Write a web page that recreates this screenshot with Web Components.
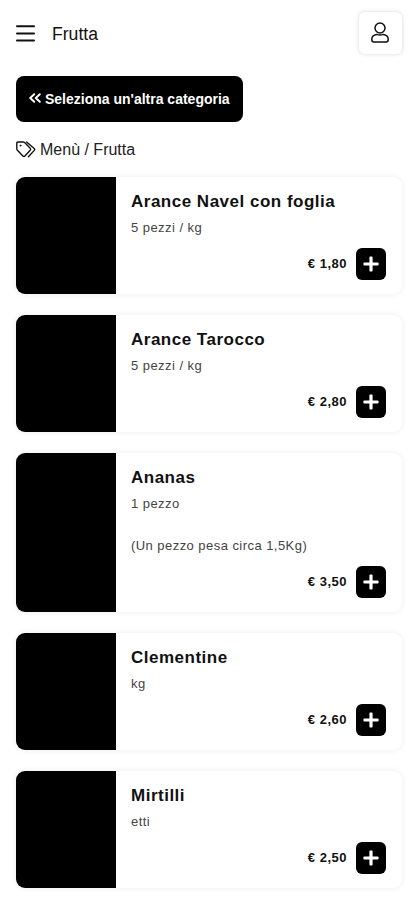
<!DOCTYPE html>
<html lang="it">
<head>
<meta charset="utf-8">
<meta name="viewport" content="width=device-width, initial-scale=1">
<title>Frutta</title>
<style>
    body {
        margin: 0;
        height: 900px;
        overflow: hidden;
        background-color: #fff;
        color: #111;
        font-family: "Liberation Sans", Arial, sans-serif;
    }

    main {
        padding: 11px 12px 0 16px;
    }

    .products {
        display: flex;
        flex-direction: column;
        gap: 21px;
        margin-top: 17px;
    }
</style>
</head>
<body>
<main>
    <top-bar>Frutta</top-bar>
    <back-button>Seleziona un'altra categoria</back-button>
    <menu-path>Menù / Frutta</menu-path>
    <div class="products">
        <product-card price="€ 1,80">Arance Navel con foglia<span slot="info">5 pezzi / kg</span></product-card>
        <product-card price="€ 2,80">Arance Tarocco<span slot="info">5 pezzi / kg</span></product-card>
        <product-card price="€ 3,50">Ananas<span slot="info">1 pezzo<br><br>(Un pezzo pesa circa 1,5Kg)</span></product-card>
        <product-card price="€ 2,60">Clementine<span slot="info">kg</span></product-card>
        <product-card price="€ 2,50">Mirtilli<span slot="info">etti</span></product-card>
    </div>
</main>

<script>
var barTemplate = document.createElement("template");
barTemplate.innerHTML = `
<style>
    :host {
        display: flex;
        align-items: center;
        height: 44px;
        margin-right: 1.5px;
        font-size: 17.6px;
    }

    .menu {
        width: 19px;
        height: 17px;
        margin-right: 17px;
    }

    .title {
        flex: 1;
        padding-top: 2px;
    }

    .user {
        display: flex;
        align-items: center;
        justify-content: center;
        width: 43px;
        height: 42px;
        border-radius: 6px;
        background-color: #fff;
        box-shadow: 0 0 4px rgba(0, 0, 0, 0.16);
    }
</style>
<svg class="menu" viewBox="0 0 19 17" stroke="#111" stroke-width="2" stroke-linecap="round">
    <path d="M1 1.3H18M1 8.5H18M1 15.6H18"/>
</svg>
<div class="title"><slot></slot></div>
<div class="user">
    <svg width="18" height="22" viewBox="0 0 18 22" fill="none" stroke="#111" stroke-width="1.5">
        <circle cx="9" cy="6" r="5"/>
        <path d="M5.6 12.4C2.6 12.8 .8 14.9 .8 17.4C.8 19.2 1.5 19.9 2.8 19.9H15.2C16.5 19.9 17.2 19.2 17.2 17.4C17.2 14.9 15.4 12.8 12.4 12.4C10.3 13.2 7.7 13.2 5.6 12.4Z"/>
    </svg>
</div>
`;

class TopBar extends HTMLElement {
    constructor(){
        super();
        this.attachShadow({mode:"open"})
    }

    connectedCallback(){
        this.shadowRoot.appendChild(barTemplate.content.cloneNode(true));
    }
}

customElements.define("top-bar", TopBar)


var backTemplate = document.createElement("template");
backTemplate.innerHTML = `
<style>
    :host {
        display: block;
        margin-top: 21px;
    }

    button {
        display: flex;
        align-items: center;
        width: 227px;
        height: 46px;
        padding: 0 0 0 13px;
        border: none;
        border-radius: 8px;
        background-color: #000;
        color: #fff;
        font: bold 14px "Liberation Sans", Arial, sans-serif;
        white-space: nowrap;
    }

    svg {
        margin: 0 4px 2px 0;
    }
</style>
<button>
    <svg width="12" height="10" viewBox="0 0 12 10" fill="none" stroke="#fff" stroke-width="1.9" stroke-linecap="round" stroke-linejoin="round">
        <path d="M5.2 1.2L1.2 5L5.2 8.8M10.8 1.2L6.8 5L10.8 8.8"/>
    </svg>
    <span><slot></slot></span>
</button>
`;

class BackButton extends HTMLElement {
    constructor(){
        super();
        this.attachShadow({mode:"open"})
    }

    connectedCallback(){
        this.shadowRoot.appendChild(backTemplate.content.cloneNode(true));
    }
}

customElements.define("back-button", BackButton)


var pathTemplate = document.createElement("template");
pathTemplate.innerHTML = `
<style>
    :host {
        display: flex;
        align-items: center;
        gap: 4px;
        height: 20px;
        margin-top: 18px;
        color: #222;
        font-size: 16px;
    }

    svg {
        margin-bottom: 2px;
    }
</style>
<svg width="20" height="17" viewBox="0 0 20 17" fill="none" stroke="#111" stroke-width="1.4" stroke-linejoin="round" stroke-linecap="round">
    <path d="M.8 2.2Q.8 1 2 1H7.2Q8 1 8.6 1.6L14.2 7.2Q15.2 8.2 14.2 9.2L8.9 14.9Q7.9 15.9 6.9 14.9L1.4 9.2Q.8 8.6 .8 7.8Z"/>
    <path d="M10.6 1L18.2 7.5Q19.2 8.4 18.3 9.4L12.4 15.8"/>
    <circle cx="4.5" cy="4.6" r=".7" fill="#111" stroke-width=".5"/>
</svg>
<span><slot></slot></span>
`;

class MenuPath extends HTMLElement {
    constructor(){
        super();
        this.attachShadow({mode:"open"})
    }

    connectedCallback(){
        this.shadowRoot.appendChild(pathTemplate.content.cloneNode(true));
    }
}

customElements.define("menu-path", MenuPath)


var cardTemplate = document.createElement("template");
cardTemplate.innerHTML = `
<style>
    :host {
        display: flex;
        min-height: 117px;
        margin-right: 1px;
        border-radius: 9px;
        overflow: hidden;
        background-color: #fff;
        box-shadow: 0 0 6px rgba(0, 0, 0, 0.08);
    }

    .photo {
        width: 100px;
        background-color: #000;
    }

    .text {
        flex: 1;
        display: flex;
        flex-direction: column;
        padding: 14px 16px 14px 15px;
    }

    .name {
        font-size: 17px;
        line-height: 21px;
        font-weight: bold;
        letter-spacing: 0.5px;
    }

    .info {
        margin-top: 5px;
        color: #444;
        font-size: 13px;
        line-height: 21px;
        letter-spacing: 0.45px;
    }

    .buy {
        display: flex;
        justify-content: flex-end;
        align-items: center;
        gap: 9px;
        margin-top: auto;
        padding-top: 10px;
        font-size: 13px;
        font-weight: bold;
        letter-spacing: 0.5px;
    }

    #price {
        padding-bottom: 2px;
    }

    button {
        display: flex;
        align-items: center;
        justify-content: center;
        width: 30px;
        height: 32px;
        padding: 0;
        border: none;
        border-radius: 6px;
        background-color: #000;
    }
</style>
<div class="photo"></div>
<div class="text">
    <div class="name"><slot></slot></div>
    <div class="info"><slot name="info"></slot></div>
    <div class="buy">
        <span id="price"></span>
        <button>
            <svg width="16" height="16" viewBox="0 0 16 16" fill="#fff">
                <rect x="6.4" y="0.4" width="3.2" height="15.2" rx="1"/>
                <rect x="0.4" y="6.4" width="15.2" height="3.2" rx="1"/>
            </svg>
        </button>
    </div>
</div>
`;

class ProductCard extends HTMLElement {
    constructor(){
        super();
        this.attachShadow({mode:"open"})
    }

    connectedCallback(){
        this.shadowRoot.appendChild(cardTemplate.content.cloneNode(true));
        this.shadowRoot.querySelector("#price").innerText = this.getAttribute("price");
    }
}

customElements.define("product-card", ProductCard)
</script>
</body>
</html>
